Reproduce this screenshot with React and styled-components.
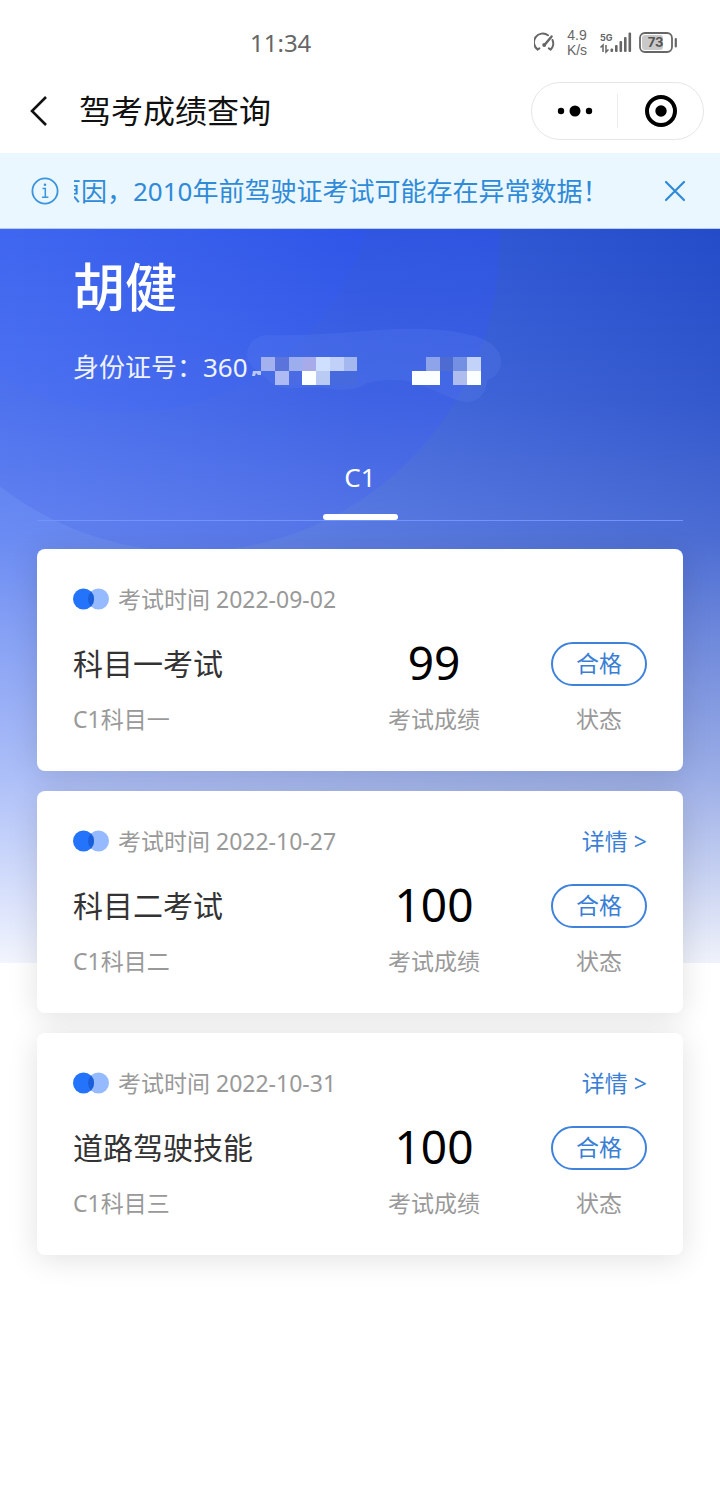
import React, { useState } from "react";
import styled, { createGlobalStyle } from "styled-components";

const exams = [
  {
    id: 1,
    date: "2022-09-02",
    title: "科目一考试",
    type: "C1科目一",
    score: 99,
    status: "合格",
    detail: false,
  },
  {
    id: 2,
    date: "2022-10-27",
    title: "科目二考试",
    type: "C1科目二",
    score: 100,
    status: "合格",
    detail: true,
  },
  {
    id: 3,
    date: "2022-10-31",
    title: "道路驾驶技能",
    type: "C1科目三",
    score: 100,
    status: "合格",
    detail: true,
  },
];

// [x, y, width, color] of the blocks covering the id number
const blocks = [
  [14, 29, 14, "#a3b2ee"],
  [28, 29, 14, "#5b74dc"],
  [42, 29, 14, "#9caeee"],
  [56, 29, 13, "#a7abea"],
  [69, 29, 14, "#cfdfff"],
  [83, 29, 14, "#c0d0f8"],
  [97, 29, 13, "#a4b7ee"],
  [28, 43, 14, "#aebaf3"],
  [42, 43, 13, "#4a6be4"],
  [55, 43, 14, "#fbffff"],
  [69, 43, 14, "#b9caf3"],
  [83, 43, 27, "#4669de"],
  [165, 43, 28, "#fbffff"],
  [179, 29, 14, "#8da4ea"],
  [193, 29, 13, "#4e6bd2"],
  [206, 29, 14, "#7390e3"],
  [206, 43, 14, "#aebcee"],
  [220, 29, 14, "#c2d2f8"],
  [220, 43, 14, "#fbffff"],
];

const StatusIcons = () => (
  <svg width="144" height="30" viewBox="0 0 144 30" fill="none">
    <g stroke="#666" strokeWidth="2" strokeLinecap="round">
      <path d="M3.600 21.500A8.500 8.500 0 0 1 14 7.200" />
      <path d="M18.500 12A8.500 8.500 0 0 1 16.600 21.500" />
      <path d="M3.600 21.500l1.800-1.200M16.600 21.500l-1.800-1.200" />
      <path d="M10.500 17L17.600 8.500" strokeWidth="2.400" />
    </g>
    <circle cx="10.200" cy="17" r="2" fill="#666" />
    <g fill="#666">
      <text x="43" y="12" fontSize="14" textAnchor="middle" fontFamily="Liberation Sans, sans-serif">
        4.9
      </text>
      <text x="43" y="27" fontSize="14" textAnchor="middle" fontFamily="Liberation Sans, sans-serif">
        K/s
      </text>
      <text x="66" y="13" fontSize="9" fontWeight="700" fontFamily="Inter, sans-serif">
        5G
      </text>
    </g>
    <path d="M69 24v-7l-2.500 2.500M72 17v7l2.500-2.500" stroke="#666" strokeWidth="1.500" />
    <g fill="#666">
      <rect x="76.500" y="20.500" width="2.600" height="3.500" rx="1" />
      <rect x="81" y="17" width="2.600" height="7" rx="1" />
      <rect x="85.500" y="13" width="2.600" height="11" rx="1" />
      <rect x="90" y="9" width="2.600" height="15" rx="1" />
      <rect x="94.500" y="4.500" width="2.600" height="19.500" rx="1" />
    </g>
    <rect x="108" y="7" width="21" height="15" rx="3" fill="#c9c9c9" />
    <rect x="106" y="5" width="32" height="19" rx="5" stroke="#666" strokeWidth="1.800" />
    <path d="M141.800 11v7.500" stroke="#666" strokeWidth="2.200" strokeLinecap="round" />
    <text
      x="121.500"
      y="19"
      fontSize="13"
      fontWeight="700"
      fill="#555"
      textAnchor="middle"
      fontFamily="Inter, sans-serif"
    >
      73
    </text>
  </svg>
);

const IdMask = () => (
  <MaskSvg width="256" height="78" viewBox="0 0 256 78">
    <path
      d="M0 26C1 15 8 8 20 7C60 8 90 5 130 2C170 -1 205 1 228 8C244 13 254 22 254 33C254 42 249 50 240 52C240 64 232 74 220 74C208 74 190 62 165 54C150 50 130 52 118 56C108 64 90 62 80 60C60 58 40 64 25 56L12 44C5 40 0 34 0 26Z"
      fill="#5c80f0"
      fillOpacity="0.24"
    />
    <path d="M6 43h8v4h-3l-2-2-1 3h-3z" fill="#b9c6f8" />
    {blocks.map(([x, y, w, color]) => (
      <rect key={`${x}-${y}`} x={x} y={y} width={w} height="14" fill={color} />
    ))}
  </MaskSvg>
);

const ExamCard = ({ exam }) => (
  <Card>
    <CardHead>
      <svg width="36" height="22" viewBox="0 0 36 22">
        <circle cx="25.500" cy="11" r="10.500" fill="#96baff" />
        <circle cx="10.500" cy="11" r="10.500" fill="#2474fb" />
        <path d="M18 3.600a10.500 10.500 0 0 1 0 14.800a10.500 10.500 0 0 1 0-14.800z" fill="#1a5fd9" />
      </svg>
      <ExamTime>考试时间 {exam.date}</ExamTime>
      {exam.detail && <Detail href="#detail">详情 &gt;</Detail>}
    </CardHead>
    <CardBody>
      <Title>{exam.title}</Title>
      <Score>{exam.score}</Score>
      <Badge>{exam.status}</Badge>
      <Label>{exam.type}</Label>
      <Label $center>考试成绩</Label>
      <Label $center>状态</Label>
    </CardBody>
  </Card>
);

export default function App() {
  const [showNotice, setShowNotice] = useState(true);

  return (
    <>
      <GlobalStyle />
      <StatusBar>
        <Time>11:34</Time>
        <StatusIcons />
      </StatusBar>
      <NavBar>
        <IconButton aria-label="返回">
          <svg width="18" height="32" viewBox="0 0 18 32" fill="none">
            <path d="M16 2L2 16l14 14" stroke="#111" strokeWidth="2.600" />
          </svg>
        </IconButton>
        <PageTitle>驾考成绩查询</PageTitle>
        <Capsule>
          <CapsuleButton aria-label="更多">
            <svg width="36" height="12" viewBox="0 0 36 12">
              <circle cx="4" cy="6" r="3.200" />
              <circle cx="18" cy="6" r="5.500" />
              <circle cx="32" cy="6" r="3.200" />
            </svg>
          </CapsuleButton>
          <CapsuleButton aria-label="关闭">
            <svg width="34" height="34" viewBox="0 0 34 34">
              <circle cx="17" cy="17" r="14" fill="none" stroke="#000" strokeWidth="4" />
              <circle cx="17" cy="17" r="5.700" />
            </svg>
          </CapsuleButton>
        </Capsule>
      </NavBar>
      {showNotice && (
        <Notice>
          <svg width="28" height="28" viewBox="0 0 28 28" fill="none" stroke="#3b95dd" strokeWidth="1.800">
            <circle cx="14" cy="14" r="12.600" />
            <path d="M11.500 11.500h2.800v8.500M11 20.200h6.400" strokeWidth="1.500" />
            <circle cx="14" cy="7.800" r="1.300" fill="#3b95dd" stroke="none" />
          </svg>
          <NoticeText>原因，2010年前驾驶证考试可能存在异常数据！</NoticeText>
          <IconButton aria-label="关闭通知" onClick={() => setShowNotice(false)}>
            <svg width="22" height="22" viewBox="0 0 22 22" fill="none">
              <path d="M2 2l18 18M20 2L2 20" stroke="#2f8ad8" strokeWidth="2.200" strokeLinecap="round" />
            </svg>
          </IconButton>
        </Notice>
      )}
      <Main>
        <Profile>
          <Name>胡健</Name>
          <IdNumber>
            身份证号：360
            <IdMask />
          </IdNumber>
        </Profile>
        <Tabs>
          <Tab>C1</Tab>
        </Tabs>
        <CardList>
          {exams.map((exam) => (
            <ExamCard key={exam.id} exam={exam} />
          ))}
        </CardList>
      </Main>
    </>
  );
}

const GlobalStyle = createGlobalStyle`
  * {
    box-sizing: border-box;
  }
  body {
    margin: 0;
    background: #fff;
    font-family: "Noto Sans", "Noto Sans CJK SC", sans-serif;
  }
  button {
    font-family: inherit;
    border: none;
    background: none;
    padding: 0;
    cursor: pointer;
  }
  svg {
    display: block;
    flex-shrink: 0;
  }
`;

const StatusBar = styled.div`
  display: flex;
  align-items: center;
  justify-content: space-between;
  height: 69px;
  padding: 16px 42px 0 250px;
`;

const Time = styled.span`
  font-size: 24px;
  line-height: 30px;
  color: #666;
`;

const NavBar = styled.header`
  display: flex;
  align-items: center;
  height: 84px;
  padding: 0 16px 0 30px;
`;

const IconButton = styled.button`
  display: flex;
  align-items: center;
`;

const PageTitle = styled.h1`
  flex: 1;
  margin: 0 0 0 31px;
  font-size: 32px;
  line-height: 40px;
  font-weight: 400;
  color: #111;
`;

const Capsule = styled.div`
  display: flex;
  width: 173px;
  height: 58px;
  padding: 11px 0;
  border: 1px solid #e6e6e6;
  border-radius: 29px;
`;

const CapsuleButton = styled.button`
  flex: 1;
  display: flex;
  align-items: center;
  justify-content: center;

  & + & {
    border-left: 1px solid #ececec;
  }
`;

const Notice = styled.div`
  display: flex;
  align-items: center;
  height: 76px;
  padding: 0 34px 0 31px;
  background: #eaf7ff;
  border-bottom: 1px solid #b5cdf5;
`;

const NoticeText = styled.div`
  flex: 1;
  margin: 0 60px 0 15px;
  overflow: hidden;
  white-space: nowrap;
  text-indent: -19px;
  font-size: 26px;
  line-height: 36px;
  color: #2f8ad8;
`;

const Main = styled.main`
  padding: 28px 37px 40px;
  background-image: linear-gradient(
      rgba(255, 255, 255, 0) 0,
      rgba(255, 255, 255, 0.07) 170px,
      rgba(255, 255, 255, 0.18) 310px,
      rgba(255, 255, 255, 0.34) 410px,
      rgba(255, 255, 255, 0.55) 550px,
      rgba(255, 255, 255, 0.73) 640px,
      rgba(255, 255, 255, 0.93) 734px
    ),
    linear-gradient(to right, rgba(84, 124, 248, 0.4), rgba(84, 124, 248, 0) 50%),
    radial-gradient(circle at 127px -65px, rgba(44, 84, 240, 0.4) 248px, transparent 249px),
    radial-gradient(circle at 190px 13px, rgba(46, 84, 228, 0.75) 309px, transparent 310px),
    linear-gradient(to right, #446cea, #345cd8 55%, #244cc9);
  background-size: 100% 734px;
  background-repeat: no-repeat;
`;

const Profile = styled.section`
  padding: 0 36px;
  color: #fff;
`;

const Name = styled.h2`
  margin: 0;
  font-size: 52px;
  line-height: 60px;
  font-weight: 500;
`;

const IdNumber = styled.p`
  display: flex;
  margin: 32px 0 0;
  font-size: 26px;
  line-height: 36px;
  color: #eef2ff;
`;

const MaskSvg = styled.svg`
  margin: -21px 0 -21px -1px;
`;

const Tabs = styled.nav`
  display: flex;
  justify-content: center;
  margin-top: 74px;
  border-bottom: 1px solid #7094fb;
`;

const Tab = styled.button`
  width: 75px;
  font-size: 26px;
  line-height: 36px;
  color: #fff;

  &::after {
    content: "";
    display: block;
    height: 6px;
    margin-top: 19px;
    border-radius: 3px;
    background: #fff;
  }
`;

const CardList = styled.div`
  display: flex;
  flex-direction: column;
  gap: 20px;
  margin-top: 28px;
`;

const Card = styled.article`
  padding: 34px 36px 36px;
  background: #fff;
  border-radius: 8px;
  box-shadow: 0 4px 30px rgba(0, 0, 0, 0.12);
`;

const CardHead = styled.div`
  display: flex;
  align-items: center;
  height: 32px;
`;

const ExamTime = styled.span`
  flex: 1;
  margin-left: 9px;
  font-size: 23px;
  line-height: 32px;
  color: #999;
`;

const Detail = styled.a`
  font-size: 23px;
  line-height: 32px;
  color: #3a7fd5;
  text-decoration: none;
`;

const CardBody = styled.div`
  display: grid;
  grid-template-columns: 1fr 92px 96px;
  column-gap: 71px;
  row-gap: 17px;
  align-items: center;
  margin-top: 27px;
`;

const Title = styled.h3`
  margin: 0;
  font-size: 30px;
  line-height: 42px;
  font-weight: 400;
  color: #333;
`;

const Score = styled.div`
  align-self: start;
  font-size: 46px;
  line-height: 40px;
  text-align: center;
  color: #000;
`;

const Badge = styled.div`
  height: 44px;
  border: 2px solid #3f82dc;
  border-radius: 22px;
  font-size: 23px;
  line-height: 38px;
  text-align: center;
  color: #3a7fd5;
`;

const Label = styled.div`
  font-size: 23px;
  line-height: 32px;
  text-align: ${(props) => (props.$center ? "center" : "left")};
  color: #999;
`;
